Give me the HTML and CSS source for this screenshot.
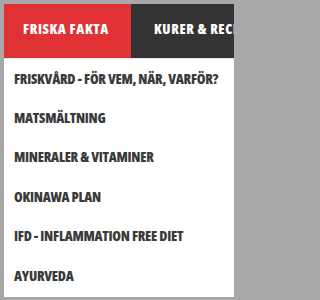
FILE: index.html
```html
<!DOCTYPE html>
<html lang="sv">
<head>
<meta charset="utf-8">
<link rel="stylesheet" href="styles.css">
</head>
<body>
<div class="panel">
  <nav class="tabs">
    <div class="tab tab-active">FRISKA FAKTA</div>
    <div class="tab tab-dark">KURER &amp; RECEPT</div>
  </nav>
  <ul class="menu">
    <li class="menu-item">FRISKVÅRD - FÖR VEM, NÄR, VARFÖR?</li>
    <li class="menu-item">MATSMÄLTNING</li>
    <li class="menu-item">MINERALER &amp; VITAMINER</li>
    <li class="menu-item">OKINAWA PLAN</li>
    <li class="menu-item">IFD - INFLAMMATION FREE DIET</li>
    <li class="menu-item">AYURVEDA</li>
  </ul>
</div>
</body>
</html>
```
FILE: styles.css
```css
html, body {
  margin: 0;
  padding: 0;
}
body {
  background: #a8a8a8;
  padding: 4px 4px 3px 4px;
  width: 238px;
  height: 300px;
  box-sizing: border-box;
  overflow: hidden;
}
.panel {
  background: #ffffff;
  height: 293px;
  overflow: hidden;
  font-family: "Open Sans", "Roboto", sans-serif;
  font-stretch: 75%;
  font-weight: 800;
  font-size: 14px;
}
.tabs {
  display: flex;
  height: 54px;
  background: #333333;
  border-bottom: 1px solid #e4e4e4;
  box-sizing: content-box;
  overflow: hidden;
}
.tab {
  display: flex;
  align-items: center;
  flex: none;
  white-space: nowrap;
  color: #ffffff;
  line-height: 20px;
  letter-spacing: 0.6px;
  padding: 0 21px 4px;
}
.tab-active {
  background: #e03234;
  width: 127px;
  box-sizing: border-box;
  padding-left: 19px;
}
.tab-dark {
  background: #333333;
  padding-left: 23px;
}
.menu {
  list-style: none;
  margin: 0;
  padding: 0 0 0 10px;
}
.menu-item {
  color: #3a3a3a;
  line-height: 20px;
  letter-spacing: -0.25px;
  padding: 9.7px 0;
  white-space: nowrap;
}
```
